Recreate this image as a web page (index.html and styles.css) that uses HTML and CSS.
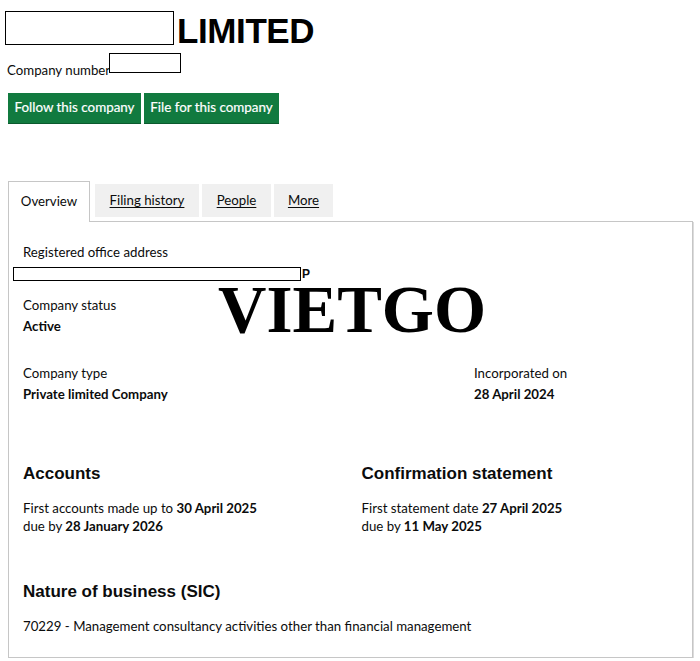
FILE: index.html
```html
<!DOCTYPE html>
<html lang="en">
<head>
<meta charset="utf-8">
<title>Company overview</title>
<link rel="stylesheet" href="styles.css">
</head>
<body>
<header class="page-head">
  <h1 class="title"><span class="redact redact-name"></span><span class="title-text">LIMITED</span></h1>
  <p class="company-number">Company number<span class="redact redact-number"></span></p>
  <div class="actions">
    <a class="button button-follow" href="#">Follow this company</a>
    <a class="button button-file" href="#">File for this company</a>
  </div>
</header>

<nav class="tabs">
  <a class="tab tab-active" href="#">Overview</a>
  <a class="tab tab-filing" href="#">Filing history</a>
  <a class="tab tab-people" href="#">People</a>
  <a class="tab tab-more" href="#">More</a>
</nav>

<main class="panel">
  <div class="field">
    <div class="field-label">Registered office address</div>
    <div class="address"><span class="redact redact-address"></span><b class="addr-end">P</b></div>
  </div>

  <div class="field field-status">
    <div class="field-label">Company status</div>
    <div class="field-value">Active</div>
  </div>

  <div class="row-type">
    <div class="field">
      <div class="field-label">Company type</div>
      <div class="field-value">Private limited Company</div>
    </div>
    <div class="field">
      <div class="field-label">Incorporated on</div>
      <div class="field-value">28 April 2024</div>
    </div>
  </div>

  <div class="columns">
    <section>
      <h2 class="section-title">Accounts</h2>
      <p class="section-text">First accounts made up to <b>30 April 2025</b><br>due by <b>28 January 2026</b></p>
    </section>
    <section>
      <h2 class="section-title">Confirmation statement</h2>
      <p class="section-text">First statement date <b>27 April 2025</b><br>due by <b>11 May 2025</b></p>
    </section>
  </div>

  <section class="sic">
    <h2 class="section-title">Nature of business (SIC)</h2>
    <p class="section-text">70229 - Management consultancy activities other than financial management</p>
  </section>

  <div class="watermark">VIETGO</div>
</main>
</body>
</html>
```

FILE: styles.css
```css
* { box-sizing: border-box; }

html, body {
  margin: 0;
  padding: 0;
  background: #ffffff;
}

body {
  font-family: Lato, "Noto Sans", Arial, sans-serif;
  font-size: 13.25px;
  color: #0b0c0c;
  width: 700px;
}

.redact {
  display: inline-block;
  background: #ffffff;
  border: 1px solid #000000;
}

.page-head {
  padding: 11px 0 0 5px;
}

.title {
  display: flex;
  align-items: flex-end;
  margin: 0;
  height: 34px;
  font-family: "Liberation Sans", Arial, sans-serif;
  font-weight: 700;
  font-size: 35px;
  letter-spacing: -0.4px;
  color: #000000;
}

.title-text {
  line-height: 28px;
}

.redact-name {
  width: 169px;
  height: 34px;
  margin-right: 3px;
}

.company-number {
  display: flex;
  align-items: flex-start;
  margin: 8px 0 0 2px;
  height: 20px;
  line-height: 16px;
  padding-top: 9px;
}

.redact-number {
  position: relative;
  top: -9px;
  margin-left: -1px;
  width: 72px;
  height: 20px;
}

.actions {
  display: flex;
  gap: 3px;
  margin: 20px 0 0 3px;
}

.button {
  display: block;
  height: 30px;
  line-height: 29px;
  padding: 0;
  text-align: center;
  white-space: nowrap;
  background: #117a3f;
  color: #ffffff;
  text-decoration: none;
  font-size: 13.4px;
  box-shadow: 0 1px 0 #0b5a2e;
  -webkit-text-stroke: 0.2px #ffffff;
}

.button-follow { width: 133px; }
.button-file { width: 135px; }

.tabs {
  display: flex;
  align-items: flex-end;
  margin: 58px 0 0 8px;
  height: 40px;
  position: relative;
  z-index: 2;
}

.tab {
  display: block;
  color: #0b0c0c;
  text-align: center;
  text-underline-offset: 2px;
  text-decoration-thickness: 1px;
}

.tab-active {
  width: 82px;
  height: 41px;
  line-height: 38px;
  background: #ffffff;
  border: 1px solid #c6c6c6;
  border-bottom: 0;
  text-decoration: none;
  margin-bottom: -1px;
}

.tab-filing, .tab-people, .tab-more {
  height: 33px;
  line-height: 33px;
  background: #f0f0f0;
  margin-bottom: 4px;
  margin-left: 3px;
}

.tab-filing { width: 104px; margin-left: 5px; }
.tab-people { width: 69px; }
.tab-more { width: 59px; }

.panel {
  position: relative;
  margin: 0 0 0 8px;
  width: 685px;
  height: 437px;
  border: 1px solid #c6c6c6;
  box-shadow: 1px 1px 0 #dcdcdc;
  padding: 20px 14px 22px 14px;
}

.field-label {
  line-height: 20px;
}

.field-value {
  line-height: 20px;
  font-weight: 700;
  margin-top: 1px;
}

.address {
  display: flex;
  align-items: flex-end;
  margin: 3px 0 0 -10px;
  height: 16px;
  line-height: 14px;
}

.redact-address {
  width: 288px;
  height: 14px;
  margin-right: 1px;
}

.addr-end {
  font-size: 12px;
  font-family: "Liberation Sans", Arial, sans-serif;
}

.field-status {
  margin-top: 14px;
}

.row-type {
  display: grid;
  grid-template-columns: 451px 1fr;
  margin-top: 27px;
}

.columns {
  display: grid;
  grid-template-columns: 1fr 1fr;
  column-gap: 22px;
  margin-top: 58px;
}

.section-title {
  margin: 0;
  font-family: "Liberation Sans", Arial, sans-serif;
  font-weight: 700;
  font-size: 17px;
  line-height: 24px;
}

.section-text {
  margin: 13px 0 0;
  line-height: 18px;
}

.section-text b { font-weight: 700; }

.sic {
  margin-top: 45px;
}

.watermark {
  position: absolute;
  left: 209px;
  top: 62px;
  font-family: "Liberation Serif", "Times New Roman", serif;
  font-weight: 700;
  font-size: 67px;
  line-height: 50px;
  color: #000000;
  pointer-events: none;
}
```
